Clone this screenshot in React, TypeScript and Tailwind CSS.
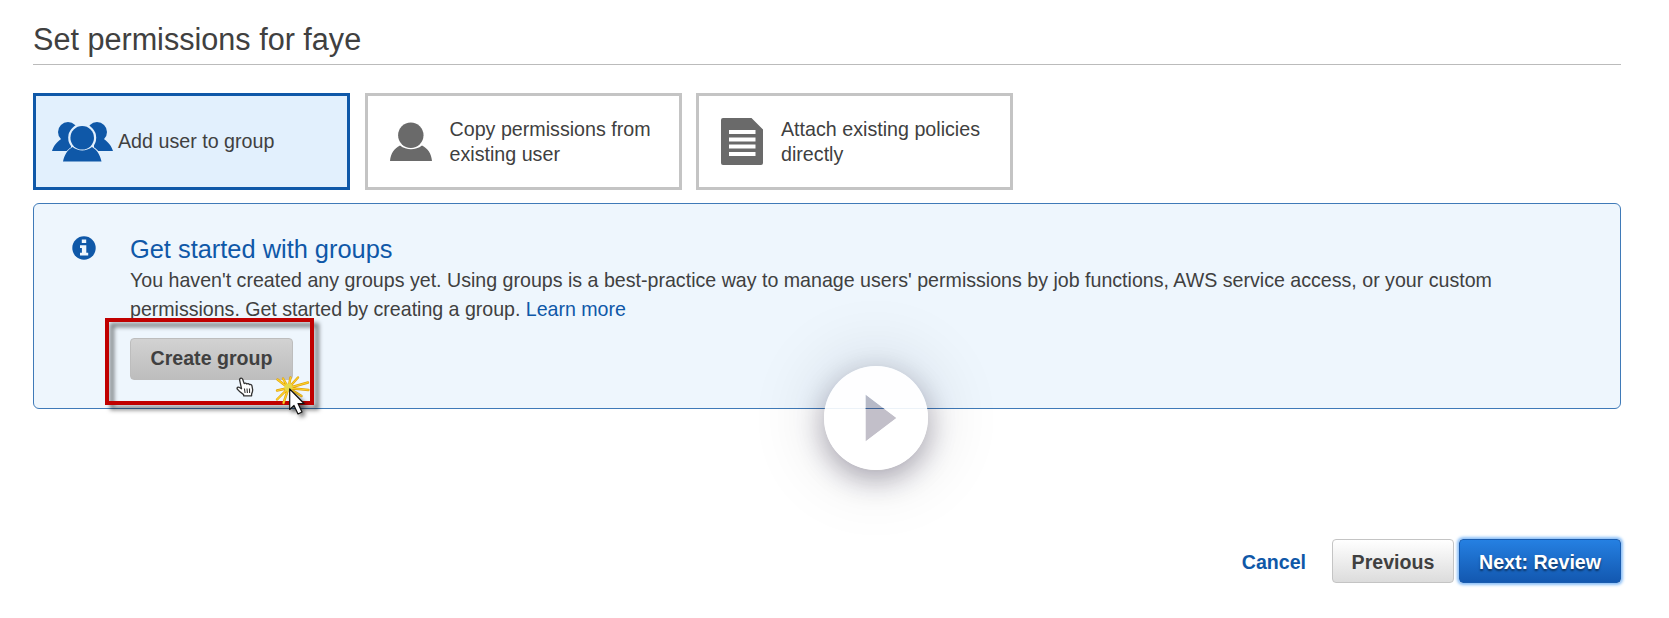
import type { ReactNode } from "react";

function GroupIcon() {
  return (
    <svg className="block h-[40px] w-[61px] shrink-0" viewBox="0 0 61 40" fill="#0f58a8">
      <circle cx="16" cy="10" r="10" />
      <circle cx="45" cy="10" r="10" />
      <path d="M0 29C1.500 24 4.500 20 10 16.500h9V29zM61 29c-1.500-5-4.500-9-10-12.500h-9V29z" />
      <path d="M9 41C11 33 14 28.500 19.500 25h22C47 28.500 50 33 52 41z" fill="#e2f0fd" />
      <circle cx="30.200" cy="15.800" r="14" fill="#e2f0fd" />
      <path d="M11 39.500C12.500 32.500 15.500 28 20.500 25c6 4.500 13.500 4.500 19.500 0 5 3 8 7.500 9.500 14.500z" />
      <circle cx="30.200" cy="15.800" r="11.800" />
    </svg>
  );
}

function UserIcon() {
  return (
    <svg className="block h-[40px] w-[42px] shrink-0" viewBox="0 0 42 40" fill="#6a6a6a">
      <path d="M0 39C.8 31.500 4 26.500 10 23.500c6.500 5 15.500 5 22 0C38 26.500 41.200 31.500 42 39z" />
      <circle cx="20.800" cy="13.200" r="12.700" />
    </svg>
  );
}

function DocumentIcon() {
  return (
    <svg className="block h-[47px] w-[42px] shrink-0" viewBox="0 0 42 47" fill="#6a6a6a">
      <path
        fillRule="evenodd"
        d="M2 0h28.500L42 11.500V45a2 2 0 0 1-2 2H2a2 2 0 0 1-2-2V2a2 2 0 0 1 2-2zM8 12v4h26.500v-4zM8 19.500v4h26.500v-4zM8 26.500v4h26.500v-4zM8 34v4h26.500v-4z"
      />
    </svg>
  );
}

function InfoIcon() {
  return (
    <svg className="block size-6" viewBox="0 0 24 24">
      <circle cx="12" cy="12" r="11.700" fill="#0f58a8" />
      <path d="M9.800 3.500h4.400v3.600H9.800zM8 9.200h6.300v7.600h1.900v2.700H8v-2.700h1.900v-4.900H8z" fill="#eef6fd" />
    </svg>
  );
}

function OptionCard({ icon, active, children }: { icon: ReactNode; active?: boolean; children: ReactNode }) {
  return (
    <button
      className={
        active
          ? "flex h-[97px] w-[317px] items-center border-[3px] border-[#0f58a8] bg-[#e2f0fd] text-left"
          : "flex h-[97px] w-[317px] items-center border-[3px] border-[#c4c4c4] bg-white text-left"
      }
    >
      <span className={active ? "w-[82px] pl-4" : "w-[82px] pl-[22px]"}>{icon}</span>
      <span className="text-[19.680px] leading-[24.500px]">{children}</span>
    </button>
  );
}

function HandCursor() {
  return (
    <svg className="absolute left-[236px] top-[377px] h-[20px] w-[18px]" viewBox="0 0 18 20">
      <path
        d="M3.600 2.800C3.600 1 6 .6 6.700 2.300L8.200 6.600c.8-.8 2.200-.6 2.600.4.900-.6 2.100-.3 2.500.6 1-.5 2.300 0 2.600 1.100l.7 3.600c.3 2-.3 3.200-1 4.700v1.800H7.600v-1.200C5.200 16 3 14.500 1.300 12.200c-.8-1.500.8-2.800 2.200-1.700l2 1.200z"
        fill="#fff"
        stroke="#333"
        strokeWidth="1.300"
        strokeLinejoin="round"
      />
      <path d="M8.400 11.500l.7 4.500M11 11.500l.4 4.500M13.500 11.500l.1 4.500" stroke="#333" strokeWidth="1.100" />
    </svg>
  );
}

const burstRays = "M19.500 22L8.500 13.500M19.500 22l-5.500-9.500M19.500 22l2-10.500M19.500 22L29 11.500M19.500 22L39 16.500M19.500 22l20 2M19.500 22l13 8M19.500 22L14.500 37M19.500 22L8 33.500M19.500 22L8 24.500";

function ClickCursor() {
  return (
    <svg className="absolute left-[269px] top-[366px] h-[60px] w-[50px] overflow-visible" viewBox="0 0 50 60">
      <path d={burstRays} stroke="#e0a30f" strokeWidth="2.400" strokeLinecap="round" />
      <path d={burstRays} stroke="#ffd42a" strokeWidth="1.100" strokeLinecap="round" />
      <circle cx="19.500" cy="21.500" r="4" fill="#e6d94a" />
      <path
        className="drop-shadow-[3px_3px_2px_rgba(0,0,0,0.5)]"
        d="M20.700 23v20.500l4.300-4 4 8.500 4-2-4-8.500h6z"
        fill="#fff"
        stroke="#111"
        strokeWidth="1.200"
        strokeLinejoin="round"
      />
    </svg>
  );
}

function PlayButton() {
  return (
    <button
      aria-label="Play"
      className="absolute left-[823.500px] top-[366px] size-[104px] rounded-full shadow-[0_9px_28px_rgba(20,10,40,0.32),0_0_66px_14px_rgba(20,20,40,0.1)]"
    >
      <svg className="block size-full" viewBox="0 0 104 104">
        <path d="M41.500 28.500v47l31-23.500z" fill="#342c4c" fillOpacity=".3" />
        <path
          fillRule="evenodd"
          d="M52 0a52 52 0 1 1 0 104A52 52 0 0 1 52 0zM41.500 28.500v47l31-23.500z"
          fill="#fff"
          fillOpacity=".9"
        />
      </svg>
    </button>
  );
}

export default function App() {
  return (
    <main className="relative h-[618px] w-[1669px] overflow-hidden bg-white pl-[33px] pr-12 font-['Liberation_Sans',Arial,sans-serif] text-[#404040]">
      <h1 className="h-[65px] border-b border-[#bbb] pt-[21px] text-[30.600px] leading-9">
        Set permissions for faye
      </h1>

      <div className="flex gap-[14.500px] pt-7">
        <OptionCard active icon={<GroupIcon />}>
          Add user to group
        </OptionCard>
        <OptionCard icon={<UserIcon />}>
          Copy permissions from
          <br />
          existing user
        </OptionCard>
        <OptionCard icon={<DocumentIcon />}>
          Attach existing policies
          <br />
          directly
        </OptionCard>
      </div>

      <section className="mt-[13px] flex h-[206px] rounded-[6px] border border-[#3f7ab8] bg-[#eef6fd]">
        <div className="w-24 pl-[38px] pt-[32px]">
          <InfoIcon />
        </div>
        <div className="pt-[29px]">
          <h2 className="text-[25.400px] leading-[33px] text-[#0f58a8]">Get started with groups</h2>
          <p className="whitespace-nowrap text-[19.620px] leading-[29px]">
            You haven't created any groups yet. Using groups is a best-practice way to manage users' permissions by job
            functions, AWS service access, or your custom
            <br />
            <span className="tracking-[-0.020px]">
              permissions. Get started by creating a group. <a className="text-[#0f58a8]">Learn more</a>
            </span>
          </p>
          <button className="mt-[14px] flex h-[42px] w-[163px] items-center justify-center rounded-[4px] border border-[#bdbdbd] bg-gradient-to-b from-[#d2d2d2] to-[#bdbdbd] text-[19.600px] font-bold">
            Create group
          </button>
        </div>
      </section>

      <footer className="flex items-center justify-end pt-[130px] text-[19.600px] font-bold">
        <a className="mr-[26px] pt-[3px] text-[#0f58a8]">Cancel</a>
        <button className="mr-[5px] h-[44px] w-[122px] rounded-[4px] border border-[#c4c4c4] bg-gradient-to-b from-white to-[#dcdcdc] pt-[3px]">
          Previous
        </button>
        <button className="h-[44px] w-[162px] rounded-[4px] border border-[#1a5cae] bg-gradient-to-b from-[#2580e2] to-[#1358b0] pt-[3px] text-white shadow-[0_0_3px_2px_#8cc0f8] [text-shadow:0_2px_2px_rgba(0,0,0,0.5)]">
          Next: Review
        </button>
      </footer>

      <div className="absolute left-[105px] top-[318px] h-[87px] w-[209px] border-4 border-[#c00000] drop-shadow-[5px_5px_2px_rgba(0,0,0,0.5)]" />
      <HandCursor />
      <ClickCursor />
      <PlayButton />
    </main>
  );
}
